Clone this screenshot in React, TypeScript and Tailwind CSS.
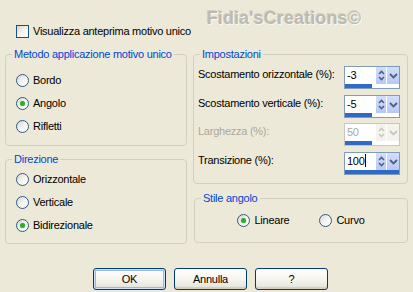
import React from "react";

const F = "font-['Liberation_Sans',Arial,sans-serif]";

function Radio({ checked, label }: { checked?: boolean; label: string }) {
  return (
    <div className="flex items-center h-[23px]">
      <span className="w-[13px] h-[13px] rounded-full border border-[#2c5b8e] bg-gradient-to-br from-[#d6d6d0] via-[#f4f4f0] to-white flex items-center justify-center">
        {checked && <span className="w-[5px] h-[5px] rounded-full bg-[#2cad2c] shadow-[0_0_1px_#7fd07f]" />}
      </span>
      <span className="ml-[4px] text-black">{label}</span>
    </div>
  );
}

function Legend({ children }: { children: React.ReactNode }) {
  return <legend className="ml-[6px] px-[2px] text-[#0046d5] leading-[13px]">{children}</legend>;
}

function UpDown({ disabled }: { disabled?: boolean }) {
  const c = disabled ? "#c9c7ba" : "#4d6185";
  return (
    <svg width="9" height="17" viewBox="0 0 9 17">
      <path d="M2 7 L4.5 4.5 L7 7" fill="none" stroke={c} strokeWidth="1.6" />
      <path d="M2 10 L4.5 12.5 L7 10" fill="none" stroke={c} strokeWidth="1.6" />
    </svg>
  );
}

function Chevron({ disabled }: { disabled?: boolean }) {
  const c = disabled ? "#c9c7ba" : "#4d6185";
  return (
    <svg width="11" height="17" viewBox="0 0 11 17">
      <path d="M2 7 L5.5 10.5 L9 7" fill="none" stroke={c} strokeWidth="1.8" />
    </svg>
  );
}

function Spinner({ value, bar, disabled, caret }: { value: string; bar: string; disabled?: boolean; caret?: boolean }) {
  return (
    <div className={`w-[56px] h-[23px] border ${disabled ? "border-[#c9c7ba]" : "border-[#7f9db9]"} bg-white flex flex-col`}>
      <div className="flex flex-1">
        <div className={`flex-1 pl-[2px] leading-[17px] ${disabled ? "text-[#aca899]" : "text-black"}`}>
          {value}
          {caret && <span className="inline-block w-[1px] h-[13px] bg-black align-[-2px]" />}
        </div>
        <div className={`w-[10px] flex items-center justify-center ${disabled ? "bg-[#f4f3ee]" : "bg-gradient-to-b from-[#d2defb] to-[#b6c9f5]"}`}>
          <UpDown disabled={disabled} />
        </div>
        <div className={`ml-[1px] w-[12px] flex items-center justify-center ${disabled ? "bg-[#f4f3ee]" : "bg-gradient-to-b from-[#d2defb] to-[#b6c9f5]"}`}>
          <Chevron disabled={disabled} />
        </div>
      </div>
      <div className={`h-[4px] ${bar} bg-[#316ac5]`} />
    </div>
  );
}

function Row({ label, disabled, children }: { label: string; disabled?: boolean; children: React.ReactNode }) {
  return (
    <div className="flex items-start h-[23px]">
      <div className={`flex-1 pt-[2px] leading-[13px] ${disabled ? "text-[#aca899]" : "text-black"}`}>{label}</div>
      {children}
    </div>
  );
}

function Btn({ children, def }: { children: React.ReactNode; def?: boolean }) {
  return (
    <button
      className={`w-[73px] h-[22px] rounded-[3px] border border-[#003c74] bg-gradient-to-b from-white via-[#f6f5f0] to-[#e3e1d7] text-black text-[11px] leading-[13px] ${
        def ? "shadow-[inset_0_0_0_1px_#cfe0fb,inset_0_0_0_2px_#98b7ec]" : "shadow-[inset_0_-2px_0_#d6d0c2]"
      }`}
    >
      {children}
    </button>
  );
}

export default function App() {
  return (
    <div className={`w-[413px] h-[292px] bg-[#ece9d8] ${F} text-[11px] leading-[13px] tracking-[-0.25px] flex flex-col`}>
      <div className="flex items-start h-[48px]">
        <div className="ml-[16px] mt-[25px] flex items-center">
          <span className="w-[13px] h-[13px] border border-[#1c5180] bg-gradient-to-br from-[#d6d6d0] via-[#f4f4f0] to-white" />
          <span className="ml-[4px] text-black">Visualizza anteprima motivo unico</span>
        </div>
        <div className="ml-auto mr-[52px] mt-[7px] text-[18px] leading-[22px] font-bold tracking-[0.1px] text-[#bdbbb0] [text-shadow:1px_1px_0_#f8f8f4,-1px_-1px_0_#d3d1c4]">
          Fidia'sCreations©
        </div>
      </div>
      <div className="flex">
        <div className="ml-[5px] w-[182px] flex flex-col">
          <fieldset className="h-[98px] border border-[#d0d0bf] rounded-[4px]">
            <Legend>Metodo applicazione motivo unico</Legend>
            <div className="pl-[10px] pt-[8px]">
              <Radio label="Bordo" />
              <Radio label="Angolo" checked />
              <Radio label="Rifletti" />
            </div>
          </fieldset>
          <fieldset className="mt-[7px] h-[91px] border border-[#d0d0bf] rounded-[4px]">
            <Legend>Direzione</Legend>
            <div className="pl-[10px] pt-[2px]">
              <Radio label="Orizzontale" />
              <Radio label="Verticale" />
              <Radio label="Bidirezionale" checked />
            </div>
          </fieldset>
        </div>
        <div className="ml-[6px] w-[215px] flex flex-col">
          <fieldset className="h-[136px] border border-[#d0d0bf] rounded-[4px]">
            <Legend>Impostazioni</Legend>
            <div className="pl-[4px] pr-[7px] pt-[5px] flex flex-col gap-[5.5px]">
              <Row label="Scostamento orizzontale (%):">
                <Spinner value="-3" bar="w-[27px]" />
              </Row>
              <Row label="Scostamento verticale (%):">
                <Spinner value="-5" bar="w-[27px]" />
              </Row>
              <Row label="Larghezza (%):" disabled>
                <Spinner value="50" bar="w-[27px]" disabled />
              </Row>
              <Row label="Transizione (%):">
                <Spinner value="100" bar="w-full" caret />
              </Row>
            </div>
          </fieldset>
          <fieldset className="mt-[8px] ml-[1px] h-[51px] border border-[#d0d0bf] rounded-[4px]">
            <Legend>Stile angolo</Legend>
            <div className="flex justify-center gap-[30px] pt-[4px]">
              <Radio label="Lineare" checked />
              <Radio label="Curvo" />
            </div>
          </fieldset>
        </div>
      </div>
      <div className="mt-[24px] ml-[93px] flex gap-[8px]">
        <Btn def>OK</Btn>
        <Btn>Annulla</Btn>
        <Btn>?</Btn>
      </div>
    </div>
  );
}
